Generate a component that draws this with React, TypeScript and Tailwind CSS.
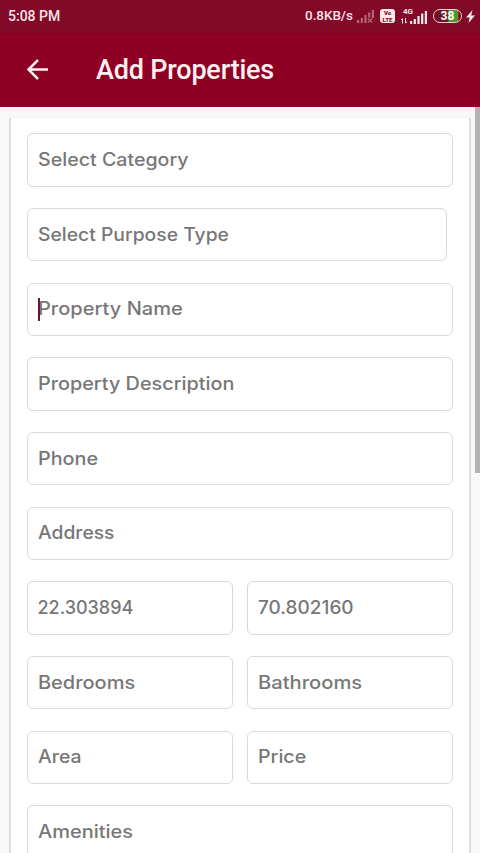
import React from "react";

type FieldProps = { label: string; text?: string; box?: string; focused?: boolean };

function Field({ label, text = "scale-x-110", box = "w-full", focused = false }: FieldProps) {
  return (
    <div className={`relative flex h-[53.33px] shrink-0 items-center rounded-[6px] border border-[#d9d9d9] bg-white pl-[10px] ${box}`}>
      <span className={`origin-left whitespace-nowrap font-['Inter','Liberation_Sans',sans-serif] text-[18px] font-medium leading-6 text-[#777777] ${text}`}>{label}</span>
      {focused && <span className="absolute left-[10px] top-[14px] h-[23px] w-[2px] bg-[#6d1434]" />}
    </div>
  );
}

function Signal({ off = false }: { off?: boolean }) {
  return (
    <svg width="17" height="13" viewBox="0 0 17 13" fill="#fbe9ee" opacity={off ? 0.4 : 1}>
      <rect x="0" y="10" width="2.2" height="3" />
      <rect x="3.7" y="8" width="2.2" height="5" />
      <rect x="7.4" y="5" width="2.2" height="8" />
      <rect x="11.1" y="2.5" width="2.2" height={off ? 5 : 10.5} />
      <rect x="14.8" y="0" width="2.2" height={off ? 8 : 13} />
      {off && <path d="M11 8.5l4 4m0-4l-4 4" stroke="#fbe9ee" strokeWidth="1.3" />}
    </svg>
  );
}

function StatusBar() {
  return (
    <div className="flex h-[33px] items-center bg-[#820a28] pl-2 pr-[5px] text-[13.4px] font-medium text-[#fbe4ea]">
      <span className="text-[14px]">5:08 PM</span>
      <div className="ml-auto flex items-center">
        <span className="mr-[4px]">0.8KB/s</span>
        <Signal off />
        <div className="ml-[6px] flex h-[14px] w-[15px] flex-col items-center justify-center rounded-[3px] bg-[#fbe9ee] text-[6px] font-black leading-[7px] text-[#820a28]">
          <span>Vo</span>
          <span>LTE</span>
        </div>
        <div className="relative ml-[6px] flex h-[15px] w-[26px] items-end justify-end">
          <span className="absolute left-[2px] top-[-1px] text-[8px] font-bold leading-[8px]">4G</span>
          <svg className="mr-[2px]" width="7" height="6" viewBox="0 0 7 6" fill="none" stroke="#fbe9ee" strokeWidth="1"><path d="M1.5 5.5V1M0 2l1.5-1.5M4.5 0v5M6 3.7L4.5 5.2" /></svg>
          <Signal />
        </div>
        <div className="ml-[6px] flex h-[14px] w-[29px] items-center justify-center rounded-full border-[1.5px] border-[#f6cbd4] bg-[linear-gradient(90deg,#6d1022_0_48%,#4f9a2c_56%_88%,#820a28_92%)] text-[12px] font-bold leading-none text-white">38</div>
        <svg className="ml-[4px]" width="9" height="13" viewBox="0 0 9 13" fill="#fbe9ee"><path d="M6.5 0L0 7.5h3.7L2.5 13 9 5.5H5.2z" /></svg>
      </div>
    </div>
  );
}

export default function App() {
  return (
    <div className="flex h-[853px] w-[480px] flex-col overflow-hidden bg-[#f8f8f8] font-['Roboto','Liberation_Sans',sans-serif]">
      <StatusBar />
      <header className="flex h-[74px] shrink-0 items-center bg-[#8e0023] pl-[27px] text-[#fff0f3]">
        <svg className="-mt-[2px]" width="21" height="21" viewBox="0 0 21 21" fill="none" stroke="currentColor" strokeWidth="2.5"><path d="M21 10.5H2M11 1L1.5 10.5 11 20" /></svg>
        <h1 className="ml-[48px] text-[27px] font-medium leading-8 tracking-[-0.2px]">Add Properties</h1>
      </header>
      <div className="flex min-h-0 flex-1 justify-between">
        <main className="ml-[9px] mt-[10px] flex w-[462px] flex-col gap-[21.34px] overflow-hidden rounded-t-[3px] border-x-2 border-t border-x-[#dedede] border-t-[#f1f1f1] bg-white pl-[15.5px] pr-[16px] pt-[15.3px]">
          <Field label="Select Category" text="scale-x-[1.09]" />
          <Field label="Select Purpose Type" text="scale-x-[1.073]" box="w-[420px]" />
          <Field label="Property Name" text="scale-x-[1.113]" focused />
          <Field label="Property Description" />
          <Field label="Phone" />
          <Field label="Address" text="scale-x-[1.07]" />
          <div className="grid shrink-0 grid-cols-2 gap-[13.6px]">
            <Field label="22.303894" text="scale-x-100" />
            <Field label="70.802160" text="scale-x-[1.055]" />
          </div>
          <div className="grid shrink-0 grid-cols-2 gap-[13.6px]">
            <Field label="Bedrooms" text="scale-x-[1.11]" />
            <Field label="Bathrooms" text="scale-x-[1.12]" />
          </div>
          <div className="grid shrink-0 grid-cols-2 gap-[13.6px]">
            <Field label="Area" text="scale-x-[1.08]" />
            <Field label="Price" text="scale-x-[1.09]" />
          </div>
          <Field label="Amenities" text="scale-x-[1.11]" />
        </main>
        <div className="h-[366px] w-[5px] bg-[#b3b3b3]" />
      </div>
    </div>
  );
}
